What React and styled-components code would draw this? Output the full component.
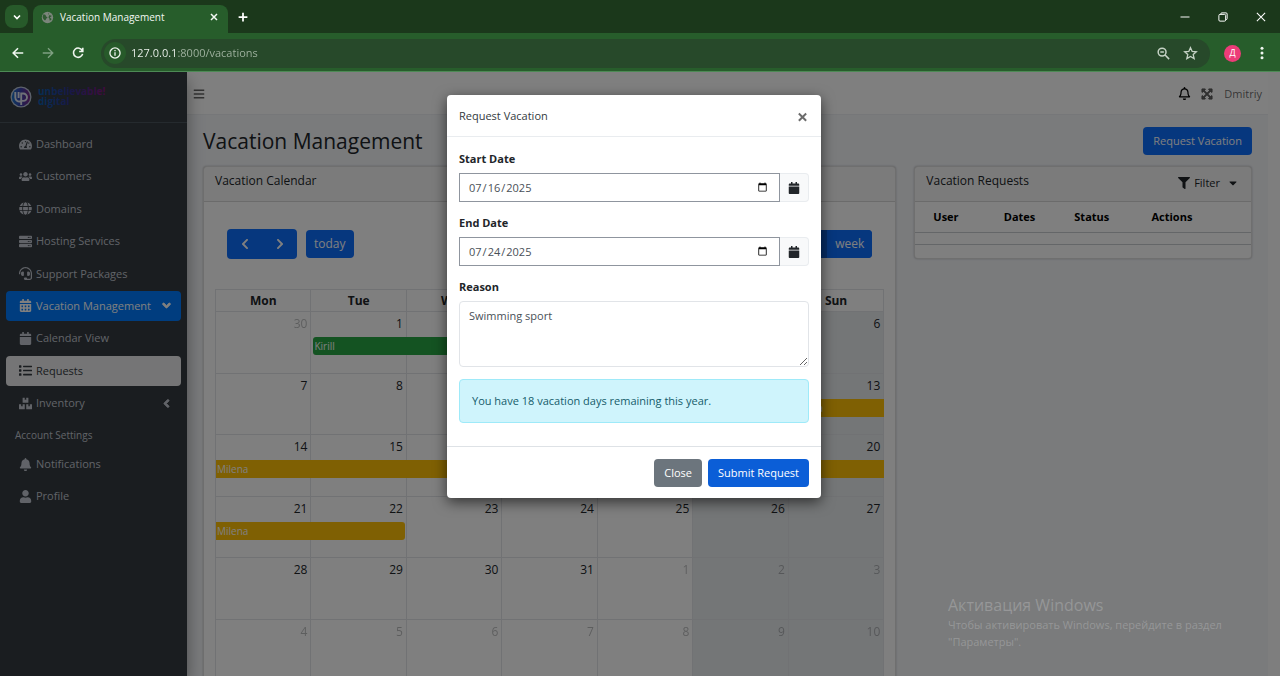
import React from 'react';
import styled, { createGlobalStyle, css } from 'styled-components';
import {
  FaTachometerAlt, FaUsers, FaGlobe, FaServer, FaHeadset, FaCalendarAlt, FaCalendar,
  FaList, FaBoxes, FaBell, FaUser, FaAngleDown, FaAngleLeft, FaFilter, FaBars,
  FaRegBell, FaExpandArrowsAlt, FaCaretDown, FaChevronLeft, FaChevronRight,
} from 'react-icons/fa';

const GlobalStyle = createGlobalStyle`
  *, *::before, *::after { box-sizing: border-box; }
  html, body, #root { height: 100%; }
  body {
    margin: 0;
    overflow: hidden;
    font-family: "Open Sans", "Noto Sans", sans-serif;
    font-size: 11px;
    line-height: 18px;
    color: #212529;
  }
  button, input, textarea { font: inherit; color: inherit; margin: 0; }
  button { cursor: pointer; border: 0; background: none; padding: 0; }
  a { color: inherit; text-decoration: none; }
  h1, h2, p, ul { margin: 0; padding: 0; font-weight: 400; }
  ul { list-style: none; }
  svg { display: block; flex: none; }
`;

const Window = styled.div`
  display: flex;
  flex-direction: column;
  height: 100vh;
`;

/* ---------- browser chrome ---------- */

const TabStrip = styled.div`
  display: flex;
  align-items: flex-end;
  height: 33px;
  padding-left: 5px;
  background: #1b381b;
  color: #fff;
`;

const TabSearch = styled.button`
  display: grid;
  place-items: center;
  width: 23px;
  height: 23px;
  margin: 0 5px 5px 0;
  border-radius: 8px;
  background: #275a2a;
`;

const Tab = styled.div`
  display: flex;
  align-items: center;
  gap: 6px;
  width: 195px;
  height: 28px;
  padding: 0 8px;
  padding-bottom: 4px;
  border-radius: 8px 8px 0 0;
  background: #275d2b;
  font-size: 10px;
  color: #f2f7f2;

  span { flex: 1; white-space: nowrap; }
`;

const IconButton = styled.button`
  display: grid;
  place-items: center;
  width: ${(p) => p.$w || 30}px;
  height: ${(p) => p.$h || 24}px;
  color: ${(p) => p.$color || 'inherit'};
`;

const WindowControls = styled.div`
  display: flex;
  align-self: flex-start;
  margin-left: auto;
`;

const Toolbar = styled.div`
  display: flex;
  align-items: center;
  height: 39px;
  padding: 2px 3px 0;
  border-bottom: 1px solid #4d8a55;
  background: #275d2b;
  color: #f0f6f0;
`;

const AddressBar = styled.div`
  display: flex;
  align-items: center;
  flex: 1;
  height: 29px;
  margin-left: 8px;
  padding: 0 6px 0 3px;
  border-radius: 15px;
  background: #27492a;
`;

const SiteInfo = styled.span`
  display: grid;
  place-items: center;
  width: 22px;
  height: 22px;
  margin-right: 5px;
  border-radius: 50%;
  background: #275a2a;
`;

const AddressInput = styled.input`
  flex: 1;
  min-width: 0;
  padding: 0;
  border: 0;
  outline: 0;
  color: #fff;
  background: linear-gradient(90deg, #f4f8f4 45px, #a3b5a3 45px);
  -webkit-background-clip: text;
  background-clip: text;
  -webkit-text-fill-color: transparent;
`;

const Avatar = styled.button`
  display: grid;
  place-items: center;
  width: 17px;
  height: 17px;
  margin: 0 6px 0 14px;
  border-radius: 50%;
  background: #ec3c78;
  color: #fff;
  font-size: 9px;
  line-height: 12px;
`;

/* ---------- page frame ---------- */

const Viewport = styled.div`
  position: relative;
  display: flex;
  flex: 1;
  min-height: 0;
  overflow: hidden;
`;

const Sidebar = styled.aside`
  z-index: 1;
  flex: none;
  width: 187px;
  background: #343a40;
  box-shadow: 0 8px 16px rgba(0, 0, 0, 0.4);
  color: #c2c7d0;
`;

const Brand = styled.a`
  display: flex;
  align-items: center;
  height: 51px;
  padding: 0 10px;
  gap: 6px;
  border-bottom: 1px solid #4b545c;
`;

const Menu = styled.ul`
  display: flex;
  flex-direction: column;
  justify-content: space-between;
  height: ${(p) => p.$height}px;
  margin: 6px 6px 0;
`;

const variants = {
  active: css`background: #007bff; color: #fff;`,
  selected: css`background: rgba(255, 255, 255, 0.9); color: #343a40;`,
};

const MenuLink = styled.a`
  display: flex;
  align-items: center;
  gap: 4px;
  height: 30px;
  padding: 0 8px 0 12px;
  border-radius: 4px;
  ${(p) => variants[p.$variant]}

  span { flex: 1; white-space: nowrap; }
`;

const MenuIcon = styled.i`
  display: grid;
  place-items: center;
  width: 14px;
  font-size: 13px;
`;

const MenuHeading = styled.h2`
  padding: 9px 15px 0;
  font-size: 10px;
  line-height: 16px;
`;

const Main = styled.div`
  flex: 1;
  min-width: 0;
  background: #f4f6f9;
`;

const Navbar = styled.header`
  display: flex;
  align-items: center;
  height: 43px;
  padding: 1px 6px 0;
  border-bottom: 1px solid #eceff2;
  background: #fff;
  color: rgba(0, 0, 0, 0.6);
`;

const NavGroup = styled.div`
  display: flex;
  align-items: center;
  gap: 11px;
  margin-left: auto;
`;

const ScrollTrack = styled.div`
  flex: none;
  width: 12px;
  background: #fcfcfc;
`;

const Content = styled.main`
  padding: 12px 16px;
`;

const PageHeader = styled.div`
  display: flex;
  align-items: center;
  justify-content: space-between;
  height: 28px;
  margin-bottom: 11px;
`;

const PageTitle = styled.h1`
  font-size: 21px;
  line-height: 28px;
`;

const Button = styled.button`
  height: 28px;
  padding: 0 10px;
  border-radius: 4px;
  background: ${(p) => p.$bg || '#0d6efd'};
  color: #fff;
  white-space: nowrap;
`;

const CalendarButton = styled(Button)`
  padding: 0 8px;
  font-size: 12px;
`;

const Columns = styled.div`
  display: grid;
  grid-template-columns: repeat(3, minmax(0, 1fr));
  gap: 18px;
  align-items: start;
`;

const Card = styled.section`
  grid-column: span ${(p) => p.$span || 1};
  border: 1px solid rgba(0, 0, 0, 0.13);
  border-radius: 4px;
  background: #fff;
  box-shadow: 0 0 2px rgba(0, 0, 0, 0.25);
`;

const CardHeader = styled.div`
  display: flex;
  justify-content: space-between;
  height: 35px;
  padding: 5px 12px 5px 11px;
  border-bottom: 1px solid rgba(0, 0, 0, 0.13);
  background: rgba(0, 0, 0, 0.03);
`;

const CardTitle = styled.h2`
  font-size: 12px;
  line-height: 18px;
`;

const FilterButton = styled.button`
  display: flex;
  align-items: center;
  gap: 4px;
  height: 22px;
  svg:last-child { margin-left: 3px; }
`;

/* ---------- calendar ---------- */

const CalendarBody = styled.div`
  padding: 27px 11px 12px;
`;

const CalendarToolbar = styled.div`
  display: flex;
  align-items: center;
  justify-content: space-between;
  height: 30px;
  margin: 0 12px 30px;
`;

const ButtonRow = styled.div`
  display: flex;
  align-items: center;
  gap: 9px;
`;

const ButtonGroup = styled.div`
  display: flex;
  border-radius: 4px;
  overflow: hidden;
  background: #0d6efd;
  button { border-radius: 0; }
`;

const ArrowButton = styled.button`
  display: grid;
  place-items: center;
  width: 35px;
  height: 30px;
  color: #fff;
`;

const CalendarTitle = styled.h2`
  font-size: 20px;
`;

const CalendarTable = styled.table`
  width: 100%;
  height: 392px;
  table-layout: fixed;
  border-collapse: collapse;
  font-size: 12px;

  th, td { padding: 0; border: 1px solid #e2e4e8; }
  th { height: 22px; line-height: 20px; font-weight: 700; text-align: center; }
  td { height: 61px; }
`;

const DayCell = styled.td`
  vertical-align: top;
  background: ${(p) => (p.$weekend ? '#e9ecef' : 'transparent')};
`;

const DayNumber = styled.div`
  padding: 3px 3px 0 0;
  height: 25px;
  text-align: right;
  opacity: ${(p) => (p.$muted ? 0.3 : 1)};
`;

const Event = styled.div`
  position: relative;
  z-index: 1;
  width: calc(${(p) => p.$days} * (100% + 1px) - ${(p) => (p.$start ? 2 : 0) + (p.$end ? 2 : 0)}px);
  height: 18px;
  margin-left: ${(p) => (p.$start ? 2 : 0)}px;
  padding-left: 1px;
  border-radius: ${(p) => (p.$start ? '3px' : '0')} ${(p) => (p.$end ? '3px 3px' : '0 0')} ${(p) => (p.$start ? '3px' : '0')};
  background: ${(p) => p.$color};
  color: #fff;
  font-size: 10px;
  line-height: 18px;
`;

/* ---------- requests ---------- */

const RequestTable = styled.table`
  width: 100%;
  table-layout: fixed;
  border-collapse: collapse;
  margin-bottom: 13px;
  color: #000;

  th {
    height: 30px;
    padding: 0 0 0 18px;
    font-weight: 700;
    text-align: left;
    border-bottom: 1px solid #c8ccd0;
  }
  td { height: 12px; padding: 0; border-bottom: 1px solid #c8ccd0; }
  th:nth-child(1), th:nth-child(2) { width: 21%; }
  th:nth-child(3) { width: 23%; }
`;

/* ---------- modal ---------- */

const Backdrop = styled.div`
  position: absolute;
  inset: 0;
  z-index: 2;
  display: flex;
  justify-content: center;
  align-items: flex-start;
  padding: 23px 12px 0 0;
  background: rgba(0, 0, 0, 0.5);
`;

const Dialog = styled.div`
  width: 374px;
  border-radius: 4px;
  background: #fff;
  box-shadow: 0 4px 14px rgba(0, 0, 0, 0.6);
`;

const DialogHeader = styled.div`
  display: flex;
  align-items: center;
  justify-content: space-between;
  height: 42px;
  padding: 0 12px;
  border-bottom: 1px solid #e9ecef;
  color: #343a40;
`;

const DialogTitle = styled.h2`
  font-size: 11px;
`;

const DialogBody = styled.div`
  display: flex;
  flex-direction: column;
  gap: 12px;
  padding: 13px 12px 23px;
`;

const Field = styled.div`
  display: flex;
  flex-direction: column;
  gap: 5px;
  label { font-weight: 700; }
`;

const InputGroup = styled.div`
  display: flex;
  height: 29px;
`;

const DateInput = styled.input`
  flex: 1;
  min-width: 0;
  padding: 0 9px 0 8px;
  border: 1px solid #8f959e;
  border-radius: 0;
  outline: 0;
  background: #fff;
  color: #495057;
`;

const Addon = styled.button`
  display: grid;
  place-items: center;
  width: 29px;
  border: 1px solid #e9ecef;
  border-left: 0;
  border-radius: 0 4px 4px 0;
  background: #f8f9fa;
`;

const ReasonInput = styled.textarea`
  display: block;
  height: 66px;
  padding: 5px 9px;
  border: 1px solid #e1e4e8;
  border-radius: 4px;
  outline: 0;
  resize: vertical;
  color: #495057;
`;

const Notice = styled.p`
  padding: 12px;
  border: 1px solid #9eeaf9;
  border-radius: 4px;
  background: #cff4fc;
  color: #155c6b;
`;

const DialogFooter = styled.div`
  display: flex;
  justify-content: flex-end;
  gap: 6px;
  padding: 12px 12px 11px;
  border-top: 1px solid #dee2e6;
`;

const Watermark = styled.div`
  position: absolute;
  right: 40px;
  bottom: 26px;
  z-index: 3;
  width: 292px;
  font-size: 11px;
  line-height: 17px;
  color: rgba(255, 255, 255, 0.22);

  strong { display: block; font-size: 16px; line-height: 22px; font-weight: 400; }
`;

/* ---------- drawings ---------- */

const Stroke = ({ size = 14, w = 1.5, children }) => (
  <svg width={size} height={size} viewBox="0 0 16 16" fill="none" stroke="currentColor" strokeWidth={w}>
    {children}
  </svg>
);

const Logo = () => (
  <svg width="100" height="26" viewBox="0 0 100 26" role="img" aria-label="unbelievable! digital">
    <defs>
      <linearGradient id="ring" x1="0" x2="1">
        <stop offset="0" stopColor="#1a73c8" />
        <stop offset="0.5" stopColor="#3b3fa8" />
        <stop offset="1" stopColor="#7d2a86" />
      </linearGradient>
      <linearGradient id="word" x1="28" x2="98" gradientUnits="userSpaceOnUse">
        <stop offset="0" stopColor="#0a5fae" />
        <stop offset="0.45" stopColor="#2e3191" />
        <stop offset="1" stopColor="#8b1480" />
      </linearGradient>
    </defs>
    <circle cx="11" cy="13" r="10.5" fill="#b9c4d6" />
    <circle cx="11" cy="13" r="9.2" fill="url(#ring)" />
    <path d="M5.3 8v5.5a4 4 0 0 0 5.2 3.8M11.2 21V9.500h2.100a3.700 3.700 0 0 1 0 7.400h-2M8.600 8v6" fill="none" stroke="#dfe3ee" strokeWidth="1.900" />
    <g fill="url(#word)" fontFamily="Open Sans, sans-serif" fontSize="10" fontWeight="700">
      <text x="28" y="11">unbelievable!</text>
      <text x="28" y="21">digital</text>
    </g>
  </svg>
);

const menu = [
  { label: 'Dashboard', icon: FaTachometerAlt },
  { label: 'Customers', icon: FaUsers },
  { label: 'Domains', icon: FaGlobe },
  { label: 'Hosting Services', icon: FaServer },
  { label: 'Support Packages', icon: FaHeadset },
  { label: 'Vacation Management', icon: FaCalendarAlt, variant: 'active', arrow: FaAngleDown },
  { label: 'Calendar View', icon: FaCalendar },
  { label: 'Requests', icon: FaList, variant: 'selected' },
  { label: 'Inventory', icon: FaBoxes, arrow: FaAngleLeft },
];

const accountMenu = [
  { label: 'Notifications', icon: FaBell },
  { label: 'Profile', icon: FaUser },
];

const MenuItems = ({ items, ...rest }) => (
  <Menu {...rest}>
    {items.map(({ label, icon: Icon, variant, arrow: Arrow }) => (
      <li key={label}>
        <MenuLink href="#" $variant={variant}>
          <MenuIcon><Icon /></MenuIcon>
          <span>{label}</span>
          {Arrow && <Arrow size={13} strokeWidth={30} stroke="currentColor" />}
        </MenuLink>
      </li>
    ))}
  </Menu>
);

const weekdays = ['Mon', 'Tue', 'Wed', 'Thu', 'Fri', 'Sat', 'Sun'];
const weeks = [
  [30, 1, 2, 3, 4, 5, 6],
  [7, 8, 9, 10, 11, 12, 13],
  [14, 15, 16, 17, 18, 19, 20],
  [21, 22, 23, 24, 25, 26, 27],
  [28, 29, 30, 31, 1, 2, 3],
  [4, 5, 6, 7, 8, 9, 10],
];
const events = {
  '0-1': { name: 'Kirill', days: 3, color: '#28a745', start: true, end: true },
  '1-6': { name: 'Milena', days: 1, color: '#ffc107', start: true },
  '2-0': { name: 'Milena', days: 7, color: '#ffc107' },
  '3-0': { name: 'Milena', days: 2, color: '#ffc107', end: true },
};
const outsideMonth = (week, day) =>
  (week === 0 && day > 20) || (week > 3 && day < 20);

const Calendar = () => (
  <CalendarTable>
    <thead>
      <tr>{weekdays.map((d) => <th key={d} scope="col">{d}</th>)}</tr>
    </thead>
    <tbody>
      {weeks.map((days, w) => (
        <tr key={w}>
          {days.map((day, d) => {
            const event = events[`${w}-${d}`];
            return (
              <DayCell key={d} $weekend={d > 4}>
                <DayNumber $muted={outsideMonth(w, day)}>{day}</DayNumber>
                {event && (
                  <Event $days={event.days} $color={event.color} $start={event.start} $end={event.end}>
                    {event.name}
                  </Event>
                )}
              </DayCell>
            );
          })}
        </tr>
      ))}
    </tbody>
  </CalendarTable>
);

const DateField = ({ id, label, value }) => (
  <Field>
    <label htmlFor={id}>{label}</label>
    <InputGroup>
      <DateInput id={id} type="date" defaultValue={value} />
      <Addon type="button" aria-label={`Pick ${label}`}><FaCalendar size={12} /></Addon>
    </InputGroup>
  </Field>
);

const BrowserChrome = () => (
  <>
    <TabStrip>
      <TabSearch aria-label="Search tabs">
        <Stroke size={12} w={2.2}><path d="M4 6l4 4 4-4" /></Stroke>
      </TabSearch>
      <Tab>
        <svg width="13" height="13" viewBox="0 0 16 16">
          <circle cx="8" cy="8" r="7" fill="#7b857b" />
          <path d="M3 4c2 0 3 1 3 2s2 1 2 2-2 1-2 2-1 2-2 1-2-3-2-4zM9 2c1 1 0 2 1 3s3 0 3 1-2 1-2 2 2 1 2 2l-2 2c-1-1 0-2-1-3s-1-2 0-3-2-2-1-4z" fill="#2f5a32" />
        </svg>
        <span>Vacation Management</span>
        <IconButton $w={12} $h={12} aria-label="Close tab">
          <Stroke size={12} w={2}><path d="M4 4l8 8M12 4l-8 8" /></Stroke>
        </IconButton>
      </Tab>
      <IconButton $h={33} aria-label="New tab">
        <Stroke size={14} w={2}><path d="M8 3v10M3 8h10" /></Stroke>
      </IconButton>
      <WindowControls>
        <IconButton $w={38} $h={33} aria-label="Minimize">
          <Stroke size={12} w={1.3}><path d="M2 8h12" /></Stroke>
        </IconButton>
        <IconButton $w={38} $h={33} aria-label="Restore">
          <Stroke size={12} w={1.3}><rect x="2.500" y="4.500" width="9" height="9" rx="1.500" /><path d="M5 4.500V4a1.500 1.500 0 0 1 1.500-1.500H12A1.500 1.500 0 0 1 13.500 4v6a1.500 1.500 0 0 1-1.500 1.500" /></Stroke>
        </IconButton>
        <IconButton $w={38} $h={33} aria-label="Close window">
          <Stroke size={12} w={1.4}><path d="M2.500 2.500l11 11M13.500 2.500l-11 11" /></Stroke>
        </IconButton>
      </WindowControls>
    </TabStrip>
    <Toolbar>
      <IconButton aria-label="Back">
        <Stroke size={14} w={1.800}><path d="M14 8H3M8 2.500L2.500 8 8 13.500" /></Stroke>
      </IconButton>
      <IconButton $color="#7fa082" aria-label="Forward">
        <Stroke size={14} w={1.500}><path d="M2 8h11M8 2.500L13.500 8 8 13.500" /></Stroke>
      </IconButton>
      <IconButton aria-label="Reload">
        <Stroke size={14} w={1.800}><path d="M13 5.500A5.300 5.300 0 1 0 13.300 9M13.500 2v4.200H9.300" /></Stroke>
      </IconButton>
      <AddressBar>
        <SiteInfo>
          <Stroke size={14} w={1.500}><circle cx="8" cy="8" r="5.800" /><path d="M8 7.200v4M8 4.600v1.400" /></Stroke>
        </SiteInfo>
        <AddressInput type="text" aria-label="Address" defaultValue="127.0.0.1:8000/vacations" />
        <IconButton $w={27} $color="#c5d2c5" aria-label="Zoom">
          <Stroke size={15} w={1.600}><circle cx="6.500" cy="6.500" r="4.200" /><path d="M9.700 9.700L14 14M4.600 6.500h3.800" /></Stroke>
        </IconButton>
        <IconButton $w={27} $color="#c5d2c5" aria-label="Bookmark this page">
          <Stroke size={15} w={1.400}><path d="M8 1.800l1.800 4 4.400.4-3.300 2.900 1 4.300L8 11.100l-3.900 2.300 1-4.300L1.800 6.200l4.400-.4z" /></Stroke>
        </IconButton>
      </AddressBar>
      <Avatar aria-label="Profile">Д</Avatar>
      <IconButton aria-label="Browser menu">
        <svg width="16" height="16" viewBox="0 0 16 16" fill="currentColor">
          <circle cx="8" cy="3.300" r="1.500" /><circle cx="8" cy="8" r="1.500" /><circle cx="8" cy="12.700" r="1.500" />
        </svg>
      </IconButton>
    </Toolbar>
  </>
);

export default function App() {
  return (
    <Window>
      <GlobalStyle />
      <BrowserChrome />
      <Viewport>
        <Sidebar>
          <Brand href="#"><Logo /></Brand>
          <nav>
            <MenuItems items={menu} $height={289} />
            <MenuHeading>Account Settings</MenuHeading>
            <MenuItems items={accountMenu} $height={62} />
          </nav>
        </Sidebar>

        <Main>
          <Navbar>
            <IconButton $w={12} aria-label="Toggle sidebar"><FaBars size={12} /></IconButton>
            <NavGroup>
              <IconButton $w={12} $color="#000" aria-label="Notifications"><FaRegBell size={13} /></IconButton>
              <IconButton $w={12} aria-label="Fullscreen"><FaExpandArrowsAlt size={12} stroke="currentColor" strokeWidth={24} /></IconButton>
              <a href="#">Dmitriy</a>
            </NavGroup>
          </Navbar>
          <Content>
            <PageHeader>
              <PageTitle>Vacation Management</PageTitle>
              <Button type="button">Request Vacation</Button>
            </PageHeader>
            <Columns>
              <Card $span={2}>
                <CardHeader><CardTitle>Vacation Calendar</CardTitle></CardHeader>
                <CalendarBody>
                  <CalendarToolbar>
                    <ButtonRow>
                      <ButtonGroup>
                        <ArrowButton aria-label="Previous"><FaChevronLeft size={12} /></ArrowButton>
                        <ArrowButton aria-label="Next"><FaChevronRight size={12} /></ArrowButton>
                      </ButtonGroup>
                      <CalendarButton type="button">today</CalendarButton>
                    </ButtonRow>
                    <CalendarTitle>July 2025</CalendarTitle>
                    <ButtonGroup>
                      <CalendarButton type="button" $bg="#0a58ca">month</CalendarButton>
                      <CalendarButton type="button">week</CalendarButton>
                    </ButtonGroup>
                  </CalendarToolbar>
                  <Calendar />
                </CalendarBody>
              </Card>
              <Card>
                <CardHeader>
                  <CardTitle>Vacation Requests</CardTitle>
                  <FilterButton type="button">
                    <FaFilter size={12} />Filter<FaCaretDown size={12} />
                  </FilterButton>
                </CardHeader>
                <RequestTable>
                  <thead>
                    <tr>
                      <th scope="col">User</th>
                      <th scope="col">Dates</th>
                      <th scope="col">Status</th>
                      <th scope="col">Actions</th>
                    </tr>
                  </thead>
                  <tbody>
                    <tr><td colSpan={4} /></tr>
                  </tbody>
                </RequestTable>
              </Card>
            </Columns>
          </Content>
        </Main>
        <ScrollTrack />

        <Backdrop>
          <Dialog role="dialog" aria-modal="true" aria-labelledby="dialog-title">
            <DialogHeader>
              <DialogTitle id="dialog-title">Request Vacation</DialogTitle>
              <IconButton $w={13} $h={13} $color="#6c6c6c" aria-label="Close">
                <Stroke size={13} w={2.400}><path d="M3.500 5.500l9 9M12.500 5.500l-9 9" /></Stroke>
              </IconButton>
            </DialogHeader>
            <DialogBody>
              <DateField id="start-date" label="Start Date" value="2025-07-16" />
              <DateField id="end-date" label="End Date" value="2025-07-24" />
              <Field>
                <label htmlFor="reason">Reason</label>
                <ReasonInput id="reason" defaultValue="Swimming sport" />
              </Field>
              <Notice>You have 18 vacation days remaining this year.</Notice>
            </DialogBody>
            <DialogFooter>
              <Button type="button" $bg="#6c757d">Close</Button>
              <Button type="submit" $bg="#0b5ed7">Submit Request</Button>
            </DialogFooter>
          </Dialog>
        </Backdrop>

        <Watermark>
          <strong>Активация Windows</strong>
          Чтобы активировать Windows, перейдите в раздел "Параметры".
        </Watermark>
      </Viewport>
    </Window>
  );
}
